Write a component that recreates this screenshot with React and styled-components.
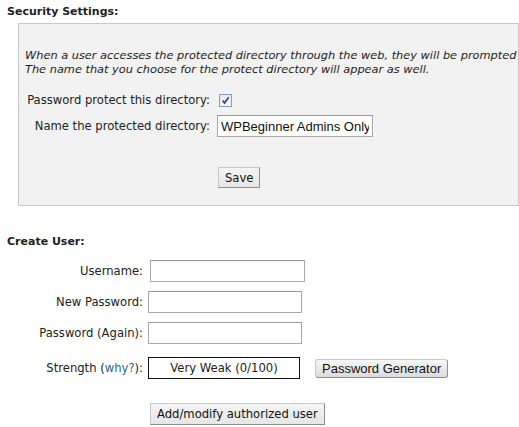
import styled, { createGlobalStyle } from 'styled-components';

const Global = createGlobalStyle`
  html, body { margin: 0; padding: 0; background: #fff; }
  body { font-family: "DejaVu Sans", Verdana, sans-serif; font-size: 11.6px; color: #222; }
`;

const Page = styled.div`
  width: 519px;
  height: 427px;
  overflow: hidden;
  position: relative;
`;

const Heading = styled.h3`
  margin: 0;
  padding: ${({ top }) => top}px 0 0 7px;
  font-size: 11px;
  font-weight: bold;
  line-height: 13px;
`;

const Panel = styled.div`
  margin: 5px 0 0 18px;
  width: 501px;
  height: 183px;
  box-sizing: border-box;
  background: #f2f2f2;
  border: 1px solid #c9c9c9;
  padding: 24px 0 0 6px;
`;

const Note = styled.p`
  margin: 0;
  font-size: 11.35px;
  font-style: italic;
  line-height: 14px;
  white-space: nowrap;
`;

const Grid = styled.div`
  display: grid;
  grid-template-columns: ${({ labelWidth }) => labelWidth}px auto;
  column-gap: ${({ gap }) => gap}px;
  align-items: center;
  margin-top: ${({ top }) => top}px;
  row-gap: ${({ rowGap }) => rowGap}px;
`;

const Label = styled.label`
  text-align: right;
  white-space: nowrap;
  line-height: 14px;
  margin-top: ${({ top }) => top || 0}px;
`;

const Cell = styled.div`
  display: flex;
  align-items: center;
  height: ${({ h }) => h || 22}px;
  margin-left: ${({ shift }) => shift || 0}px;
  margin-top: ${({ top }) => top || 0}px;
  gap: 15px;
`;

const Check = styled.span`
  display: inline-flex;
  align-items: center;
  justify-content: center;
  width: 11px;
  height: 11px;
  border: 1px solid #8b9bb4;
  background: linear-gradient(#e4e8f0, #fafbfd);
`;

const TextInput = styled.input`
  box-sizing: border-box;
  width: ${({ w }) => w}px;
  height: 22px;
  border: 1px solid #a9a9a9;
  border-top-color: #9a9a9a;
  background: #fff;
  padding: 1px 3px 0;
  font-family: "Liberation Sans", Arial, sans-serif;
  font-size: 13px;
  color: #111;
  outline: none;
`;

const StrengthBox = styled.div`
  box-sizing: border-box;
  width: 152px;
  height: 22px;
  border: 1px solid #111;
  background: #fff;
  display: flex;
  align-items: center;
  justify-content: center;
`;

const Button = styled.button`
  box-sizing: border-box;
  height: ${({ h }) => h}px;
  padding: 0 ${({ px }) => px}px;
  font-family: ${({ arial }) => (arial ? '"Liberation Sans", Arial, sans-serif' : '"DejaVu Sans", Verdana, sans-serif')};
  font-size: ${({ arial }) => (arial ? 13 : 11.6)}px;
  color: #111;
  background: ${({ arial }) => (arial ? 'linear-gradient(#f6f6f6, #dcdcdc)' : 'linear-gradient(#f5f5f5, #e6e6e6)')};
  border: 1px solid #c8c8c8;
  border-right-color: #8f8f8f;
  border-bottom-color: #8f8f8f;
  border-radius: ${({ arial }) => (arial ? 3 : 0)}px;
  cursor: pointer;
`;

const Center = styled.div`
  margin: ${({ top }) => top}px 0 0 ${({ left }) => left}px;
`;

const Link = styled.a`
  color: #2b6a8c;
  text-decoration: none;
`;

export default function App() {
  return (
    <Page>
      <Global />
      <Heading top={5}>Security Settings:</Heading>
      <Panel>
        <Note>When a user accesses the protected directory through the web, they will be prompted</Note>
        <Note>The name that you choose for the protect directory will appear as well.</Note>
        <Grid labelWidth={185} gap={9} top={17} rowGap={8}>
          <Label>Password protect this directory:</Label>
          <Cell h={14} shift={0}>
            <Check>
              <svg width="9" height="9" viewBox="0 0 9 9">
                <path d="M1.5 4.5 L3.6 7 L7.6 1.3" fill="none" stroke="#2f4596" strokeWidth="1.7" />
              </svg>
            </Check>
          </Cell>
          <Label>Name the protected directory:</Label>
          <Cell shift={-2}>
            <TextInput w={156} defaultValue="WPBeginner Admins Only" />
          </Cell>
        </Grid>
        <Center top={30} left={193}>
          <Button h={21} px={6}>Save</Button>
        </Center>
      </Panel>
      <Heading top={29}>Create User:</Heading>
      <Grid labelWidth={143} gap={6} top={12} rowGap={9}>
        <Label>Username:</Label>
        <Cell shift={1}><TextInput w={155} /></Cell>
        <Label>New Password:</Label>
        <Cell shift={-1}><TextInput w={154} type="password" /></Cell>
        <Label>Password (Again):</Label>
        <Cell shift={-1}><TextInput w={154} type="password" /></Cell>
        <Label top={3}>Strength (<Link href="#">why?</Link>):</Label>
        <Cell shift={-1} h={24} top={3}>
          <StrengthBox>Very Weak (0/100)</StrengthBox>
          <Button arial h={19} px={6}>Password Generator</Button>
        </Cell>
      </Grid>
      <Center top={23} left={150}>
        <Button h={22} px={6}>Add/modify authorized user</Button>
      </Center>
    </Page>
  );
}
